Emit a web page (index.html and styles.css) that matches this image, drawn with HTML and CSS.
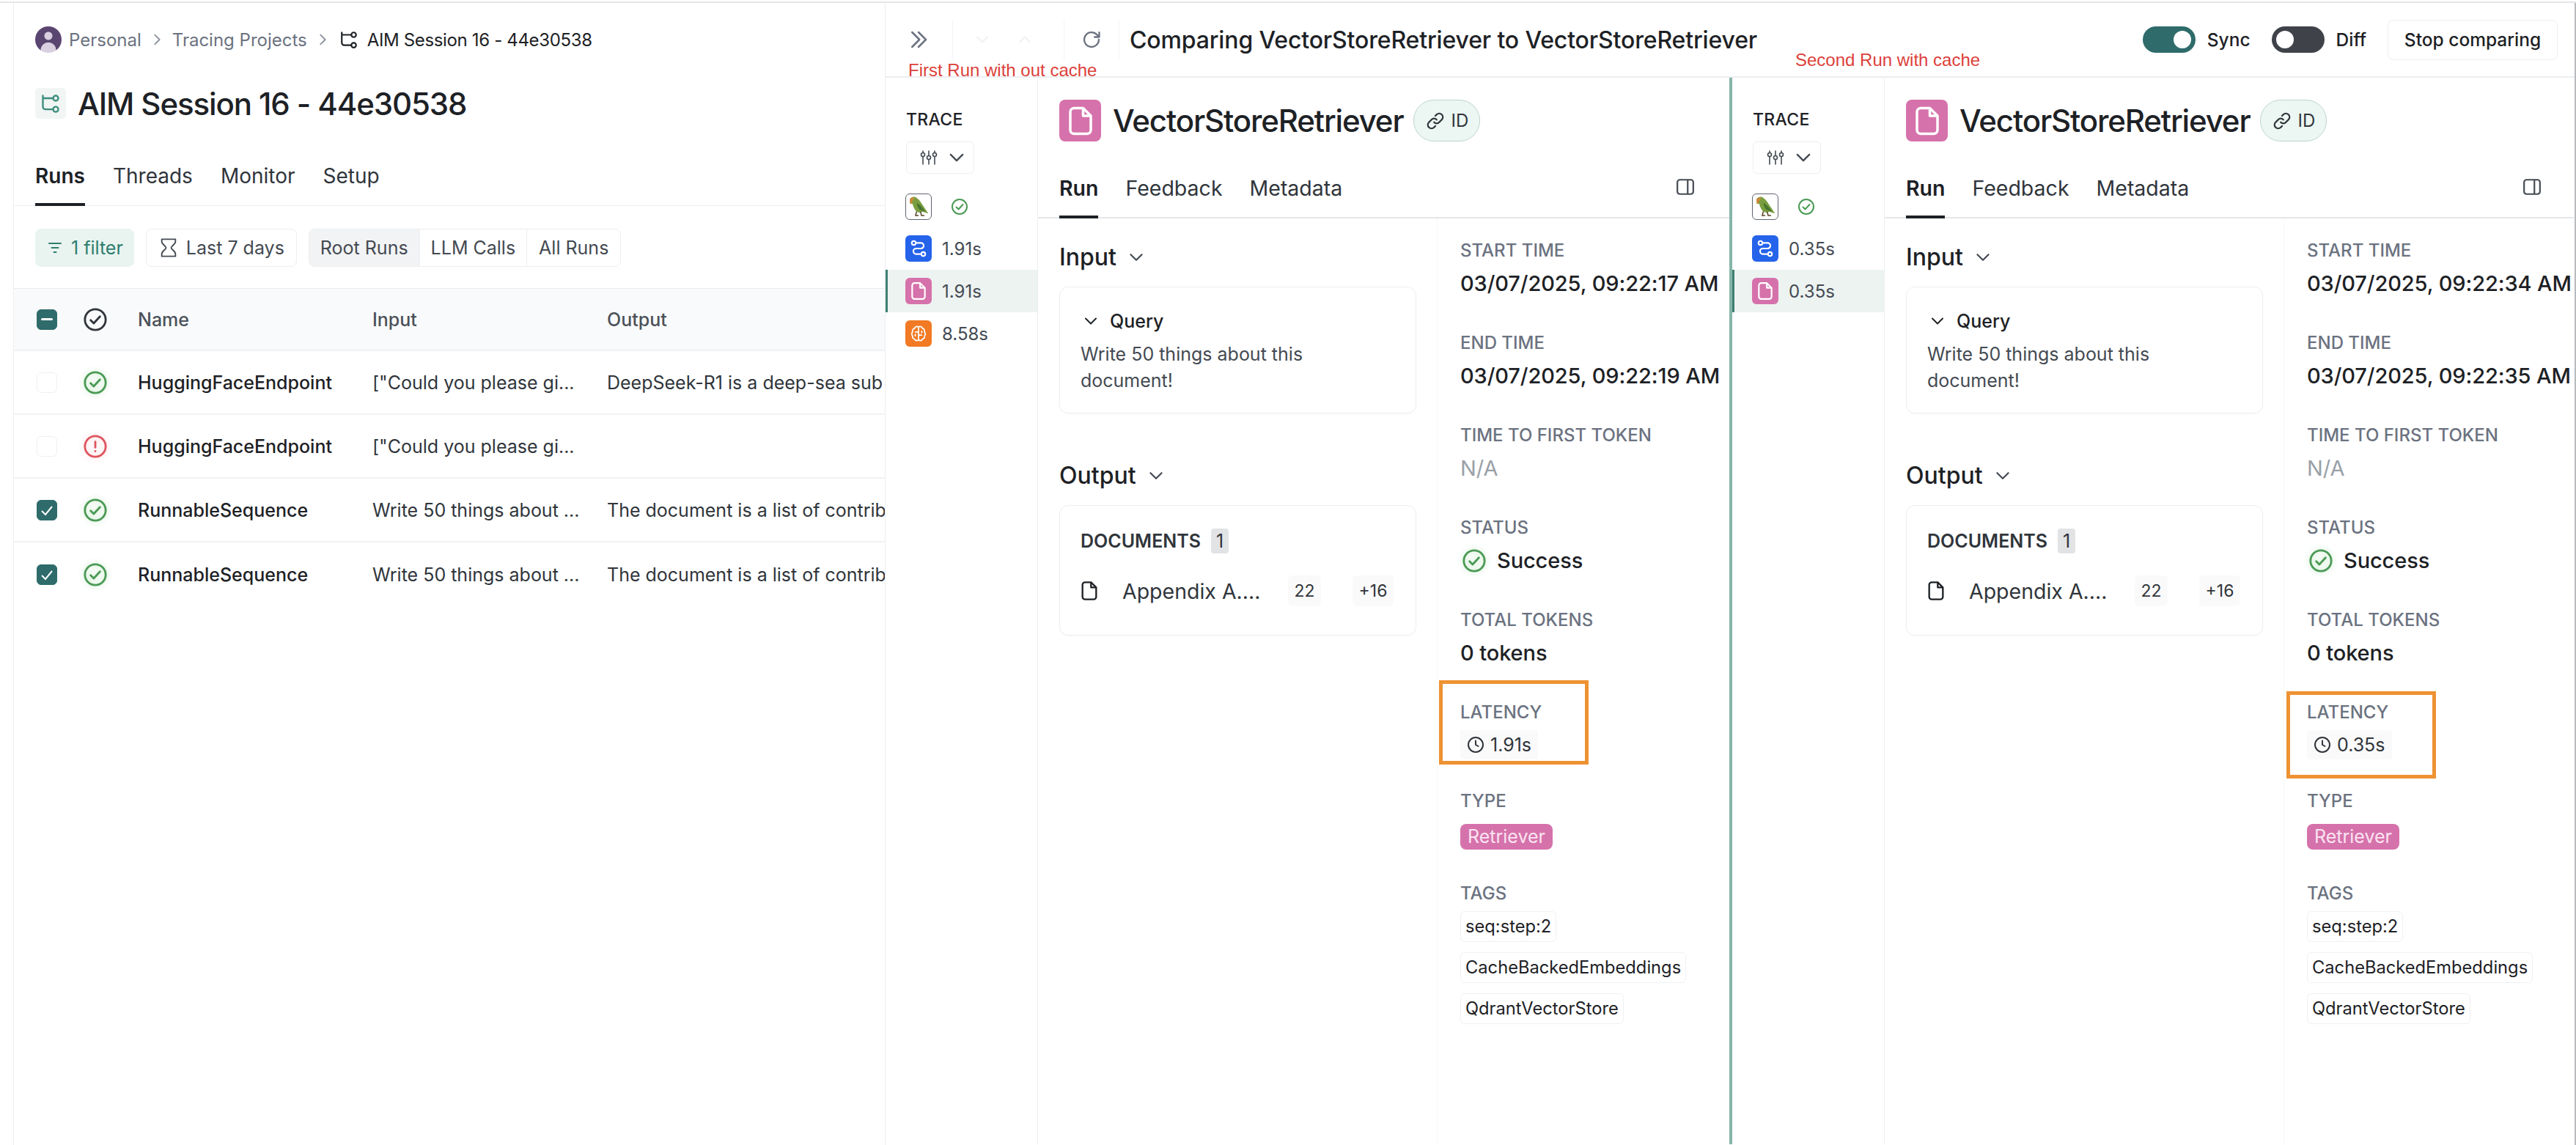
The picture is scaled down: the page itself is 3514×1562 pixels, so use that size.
FILE: index.html
```html
<!DOCTYPE html>
<html>
<head>
    <meta http-equiv="Content-Type" content="text/html; charset=UTF-8">
    <title>AIM Session 16 - 44e30538</title>
    <link rel="stylesheet" href="styles.css">
</head>
<body>
<svg class="sprite" xmlns="http://www.w3.org/2000/svg">
    <symbol id="i-chev-r" viewBox="0 0 24 24"><path d="M9 5l7 7-7 7" fill="none" stroke="currentColor" stroke-width="2" stroke-linecap="round" stroke-linejoin="round"/></symbol>
    <symbol id="i-chev-d" viewBox="0 0 24 24"><path d="M5 8.5l7 7 7-7" fill="none" stroke="currentColor" stroke-width="2" stroke-linecap="round" stroke-linejoin="round"/></symbol>
    <symbol id="i-chev-u" viewBox="0 0 24 24"><path d="M5 15.5l7-7 7 7" fill="none" stroke="currentColor" stroke-width="2" stroke-linecap="round" stroke-linejoin="round"/></symbol>
    <symbol id="i-double" viewBox="0 0 24 24"><path d="M5 4l8 8-8 8M12 4l8 8-8 8" fill="none" stroke="currentColor" stroke-width="2" stroke-linecap="round" stroke-linejoin="round"/></symbol>
    <symbol id="i-tree" viewBox="0 0 24 24"><g fill="none" stroke="currentColor" stroke-width="2" stroke-linecap="round"><path d="M3 3v13a3 3 0 0 0 3 3h9M3 6h12"/><circle cx="18" cy="6" r="3"/><circle cx="18" cy="19" r="3"/></g></symbol>
    <symbol id="i-check" viewBox="0 0 24 24"><g fill="none" stroke="currentColor" stroke-width="2" stroke-linecap="round" stroke-linejoin="round"><circle cx="12" cy="12" r="10"/><path d="M7.5 12.5l3 3 6-6.5"/></g></symbol>
    <symbol id="i-alert" viewBox="0 0 24 24"><g fill="none" stroke="currentColor" stroke-width="2" stroke-linecap="round"><circle cx="12" cy="12" r="10"/><path d="M12 7.5v5.5M12 16.5v.1"/></g></symbol>
    <symbol id="i-filter" viewBox="0 0 24 24"><path d="M4 6h16M7.5 12h9M10.5 18h3" fill="none" stroke="currentColor" stroke-width="2" stroke-linecap="round"/></symbol>
    <symbol id="i-glass" viewBox="0 0 24 24"><path d="M4 2h16a0 0 0 0 1 0 0v3c0 3-5 5-5 7s5 4 5 7v3H4v-3c0-3 5-5 5-7S4 8 4 5z" fill="none" stroke="currentColor" stroke-width="1.6" stroke-linejoin="round"/></symbol>
    <symbol id="i-refresh" viewBox="0 0 24 24"><path d="M20.5 12a8.5 8.5 0 1 1-2.500-6L21 9M21 3.500V9h-5.500" fill="none" stroke="currentColor" stroke-width="2" stroke-linecap="round" stroke-linejoin="round"/></symbol>
    <symbol id="i-file" viewBox="0 0 24 24"><g fill="none" stroke="currentColor" stroke-width="2" stroke-linejoin="round"><path d="M14 2H7a3 3 0 0 0-3 3v14a3 3 0 0 0 3 3h10a3 3 0 0 0 3-3V8z"/><path d="M14 2v6h6"/></g></symbol>
    <symbol id="i-route" viewBox="0 0 24 24"><g fill="none" stroke="currentColor" stroke-width="2" stroke-linecap="round"><circle cx="6" cy="5" r="2.5"/><circle cx="18" cy="19" r="2.5"/><path d="M10 5h5a3.500 3.500 0 0 1 0 7H9a3.500 3.500 0 0 0 0 7h5"/></g></symbol>
    <symbol id="i-brain" viewBox="0 0 24 24"><g fill="none" stroke="currentColor" stroke-width="1.6" stroke-linecap="round" stroke-linejoin="round"><path d="M12 4v16M12 4a3 3 0 0 0-5 1.500A3.500 3.500 0 0 0 4.500 10a3.500 3.500 0 0 0 0 5A3.500 3.500 0 0 0 7 19a3 3 0 0 0 5 1M12 4a3 3 0 0 1 5 1.500A3.500 3.500 0 0 1 19.500 10a3.500 3.500 0 0 1 0 5A3.500 3.500 0 0 1 17 19a3 3 0 0 1-5 1"/><path d="M8 10h4M16 14h-4M8 15a2 2 0 0 1 0-2M16 9a2 2 0 0 1 0 2"/></g></symbol>
    <symbol id="i-sliders" viewBox="0 0 24 24"><g fill="none" stroke="currentColor" stroke-width="1.6" stroke-linecap="round"><path d="M4 3v2M4 11v10M12 3v6M12 15v6M20 3v2M20 11v10"/><circle cx="4" cy="8" r="2.5"/><circle cx="12" cy="12" r="2.5"/><circle cx="20" cy="8" r="2.5"/></g></symbol>
    <symbol id="i-link" viewBox="0 0 24 24"><g fill="none" stroke="currentColor" stroke-width="2" stroke-linecap="round"><path d="M10.5 13.500a4 4 0 0 0 6 0l3-3a4.200 4.200 0 0 0-6-6L12 6"/><path d="M13.5 10.500a4 4 0 0 0-6 0l-3 3a4.200 4.200 0 0 0 6 6L12 18"/></g></symbol>
    <symbol id="i-side" viewBox="0 0 24 24"><g fill="none" stroke="currentColor" stroke-width="2"><rect x="2" y="3" width="20" height="18" rx="3"/><path d="M15 3v18"/></g></symbol>
    <symbol id="i-clock" viewBox="0 0 24 24"><g fill="none" stroke="currentColor" stroke-width="2" stroke-linecap="round" stroke-linejoin="round"><circle cx="12" cy="12" r="10"/><path d="M12 6.500V12l3.500 2"/></g></symbol>
    <symbol id="i-parrot" viewBox="0 0 24 24"><path d="M3 5c1-3 5-4 7-2 3 2 4 4 6 7l6 9-6-2-3 1-3-1C8 15 6 11 6 9L3.500 9z" fill="#7a9e3f"/><path d="M3 5c0-2 3-3 5-2L6 6 5 9 3.500 9z" fill="#c98a3a"/><path d="M10 8c3 1 6 5 9 9l-6-2-2-3z" fill="#47752f"/><path d="M10 17l-1 4h3M14 17l1 4h3" fill="none" stroke="#5b4a2a" stroke-width="1.2"/></symbol>
</svg>

<div class="page">
    <div class="project">
        <div class="crumbs">
            <span class="avatar"></span>
            <span>Personal</span>
            <svg class="crumb-sep"><use href="#i-chev-r"/></svg>
            <span>Tracing Projects</span>
            <svg class="crumb-sep"><use href="#i-chev-r"/></svg>
            <svg class="crumb-ico"><use href="#i-tree"/></svg>
            <span class="crumb-now">AIM Session 16 - 44e30538</span>
        </div>
        <div class="project-title">
            <span class="title-ico"><svg><use href="#i-tree"/></svg></span>
            <h1>AIM Session 16 - 44e30538</h1>
        </div>
        <div class="project-tabs">
            <a class="on">Runs</a><a>Threads</a><a>Monitor</a><a>Setup</a>
        </div>
        <div class="filters">
            <span class="chip chip-green"><svg><use href="#i-filter"/></svg>1 filter</span>
            <span class="chip"><svg><use href="#i-glass"/></svg>Last 7 days</span>
            <span class="seg"><b>Root Runs</b><b>LLM Calls</b><b>All Runs</b></span>
        </div>
        <div class="table">
            <div class="row head">
                <span class="box box-on"><i class="dash"></i></span>
                <svg class="st"><use href="#i-check"/></svg>
                <span>Name</span><span>Input</span><span>Output</span>
            </div>
            <div class="row">
                <span class="box"></span>
                <svg class="st st-ok"><use href="#i-check"/></svg>
                <span class="name">HuggingFaceEndpoint</span><span>["Could you please gi...</span><span>DeepSeek-R1 is a deep-sea sub</span>
            </div>
            <div class="row">
                <span class="box"></span>
                <svg class="st st-err"><use href="#i-alert"/></svg>
                <span class="name">HuggingFaceEndpoint</span><span>["Could you please gi...</span><span></span>
            </div>
            <div class="row">
                <span class="box box-on"><svg viewBox="0 0 24 24"><path d="M5 13l5 5 9-11" fill="none" stroke="#fff" stroke-width="2"/></svg></span>
                <svg class="st st-ok"><use href="#i-check"/></svg>
                <span class="name">RunnableSequence</span><span>Write 50 things about ...</span><span>The document is a list of contrib</span>
            </div>
            <div class="row">
                <span class="box box-on"><svg viewBox="0 0 24 24"><path d="M5 13l5 5 9-11" fill="none" stroke="#fff" stroke-width="2"/></svg></span>
                <svg class="st st-ok"><use href="#i-check"/></svg>
                <span class="name">RunnableSequence</span><span>Write 50 things about ...</span><span>The document is a list of contrib</span>
            </div>
        </div>
    </div>

    <div class="compare">
        <div class="compare-head">
            <span class="cell cell-a"><svg class="ico-double"><use href="#i-double"/></svg></span>
            <span class="cell cell-b"><svg><use href="#i-chev-d"/></svg><svg><use href="#i-chev-u"/></svg></span>
            <span class="cell cell-c"><svg><use href="#i-refresh"/></svg></span>
            <h2>Comparing VectorStoreRetriever to VectorStoreRetriever</h2>
            <span class="switch switch-on"></span><span class="switch-label">Sync</span>
            <span class="switch switch-off"></span><span class="switch-label">Diff</span>
            <span class="stop">Stop comparing</span>
        </div>
        <div class="panels">
            <div class="panel panel-first">
                <div class="trace">
                    <div class="trace-label">TRACE</div>
                    <span class="trace-btn"><svg><use href="#i-sliders"/></svg><svg><use href="#i-chev-d"/></svg></span>
                    <div class="trace-row trace-root">
                        <span class="sq sq-parrot"><svg><use href="#i-parrot"/></svg></span>
                        <svg class="st-small"><use href="#i-check"/></svg>
                    </div>
                    <div class="trace-row"><span class="sq sq-blue"><svg><use href="#i-route"/></svg></span>1.91s</div>
                    <div class="trace-row sel"><span class="sq sq-pink"><svg><use href="#i-file"/></svg></span>1.91s</div>
                    <div class="trace-row"><span class="sq sq-orange"><svg><use href="#i-brain"/></svg></span>8.58s</div>
                </div>
                <div class="detail">
                    <div class="detail-head">
                        <span class="big-ico"><svg><use href="#i-file"/></svg></span>
                        <h3>VectorStoreRetriever</h3>
                        <span class="id-pill"><svg><use href="#i-link"/></svg>ID</span>
                    </div>
                    <div class="detail-tabs">
                        <a class="on">Run</a><a>Feedback</a><a>Metadata</a>
                        <svg class="side-ico"><use href="#i-side"/></svg>
                    </div>
                    <div class="detail-body">
                        <div class="main">
                            <div class="sec">Input <svg><use href="#i-chev-d"/></svg></div>
                            <div class="card card-in">
                                <div class="query"><svg><use href="#i-chev-d"/></svg>Query</div>
                                <p>Write 50 things about this document!</p>
                            </div>
                            <div class="sec sec-out">Output <svg><use href="#i-chev-d"/></svg></div>
                            <div class="card card-out">
                                <div class="docs">DOCUMENTS <span class="count">1</span></div>
                                <div class="doc">
                                    <svg><use href="#i-file"/></svg>
                                    <span class="doc-name">Appendix A....</span>
                                    <span class="num num-a">22</span>
                                    <span class="num num-b">+16</span>
                                </div>
                            </div>
                        </div>
                        <div class="meta">
                            <div class="item"><label>START TIME</label><div class="val">03/07/2025, 09:22:17 AM</div></div>
                            <div class="item"><label>END TIME</label><div class="val">03/07/2025, 09:22:19 AM</div></div>
                            <div class="item"><label>TIME TO FIRST TOKEN</label><div class="val val-na">N/A</div></div>
                            <div class="item"><label>STATUS</label><div class="val val-st"><svg class="st st-ok"><use href="#i-check"/></svg>Success</div></div>
                            <div class="item"><label>TOTAL TOKENS</label><div class="val">0 tokens</div></div>
                            <div class="item item-lat"><label>LATENCY</label><div class="lat"><svg><use href="#i-clock"/></svg>1.91s</div></div>
                            <div class="item"><label>TYPE</label><div class="type-wrap"><span class="type">Retriever</span></div></div>
                            <div class="item"><label>TAGS</label>
                                <div class="tags"><span>seq:step:2</span><span>CacheBackedEmbeddings</span><span>QdrantVectorStore</span></div>
                            </div>
                        </div>
                    </div>
                </div>
            </div>

            <div class="panel panel-second">
                <div class="trace">
                    <div class="trace-label">TRACE</div>
                    <span class="trace-btn"><svg><use href="#i-sliders"/></svg><svg><use href="#i-chev-d"/></svg></span>
                    <div class="trace-row trace-root">
                        <span class="sq sq-parrot"><svg><use href="#i-parrot"/></svg></span>
                        <svg class="st-small"><use href="#i-check"/></svg>
                    </div>
                    <div class="trace-row"><span class="sq sq-blue"><svg><use href="#i-route"/></svg></span>0.35s</div>
                    <div class="trace-row sel"><span class="sq sq-pink"><svg><use href="#i-file"/></svg></span>0.35s</div>
                </div>
                <div class="detail">
                    <div class="detail-head">
                        <span class="big-ico"><svg><use href="#i-file"/></svg></span>
                        <h3>VectorStoreRetriever</h3>
                        <span class="id-pill"><svg><use href="#i-link"/></svg>ID</span>
                    </div>
                    <div class="detail-tabs">
                        <a class="on">Run</a><a>Feedback</a><a>Metadata</a>
                        <svg class="side-ico"><use href="#i-side"/></svg>
                    </div>
                    <div class="detail-body">
                        <div class="main">
                            <div class="sec">Input <svg><use href="#i-chev-d"/></svg></div>
                            <div class="card card-in">
                                <div class="query"><svg><use href="#i-chev-d"/></svg>Query</div>
                                <p>Write 50 things about this document!</p>
                            </div>
                            <div class="sec sec-out">Output <svg><use href="#i-chev-d"/></svg></div>
                            <div class="card card-out">
                                <div class="docs">DOCUMENTS <span class="count">1</span></div>
                                <div class="doc">
                                    <svg><use href="#i-file"/></svg>
                                    <span class="doc-name">Appendix A....</span>
                                    <span class="num num-a">22</span>
                                    <span class="num num-b">+16</span>
                                </div>
                            </div>
                        </div>
                        <div class="meta">
                            <div class="item"><label>START TIME</label><div class="val">03/07/2025, 09:22:34 AM</div></div>
                            <div class="item"><label>END TIME</label><div class="val">03/07/2025, 09:22:35 AM</div></div>
                            <div class="item"><label>TIME TO FIRST TOKEN</label><div class="val val-na">N/A</div></div>
                            <div class="item"><label>STATUS</label><div class="val val-st"><svg class="st st-ok"><use href="#i-check"/></svg>Success</div></div>
                            <div class="item"><label>TOTAL TOKENS</label><div class="val">0 tokens</div></div>
                            <div class="item item-lat"><label>LATENCY</label><div class="lat"><svg><use href="#i-clock"/></svg>0.35s</div></div>
                            <div class="item"><label>TYPE</label><div class="type-wrap"><span class="type">Retriever</span></div></div>
                            <div class="item"><label>TAGS</label>
                                <div class="tags"><span>seq:step:2</span><span>CacheBackedEmbeddings</span><span>QdrantVectorStore</span></div>
                            </div>
                        </div>
                    </div>
                </div>
            </div>
        </div>
    </div>
</div>

<!-- annotations drawn on top of the screenshot -->
<div class="note note-first">First Run with out cache</div>
<div class="note note-second">Second Run with cache</div>
<div class="mark mark-first"></div>
<div class="mark mark-second"></div>
</body>
</html>
```

FILE: styles.css
```css
html, body{margin:0; padding:0; background:#fff;}
body{position:relative; width:3514px; height:1562px; overflow:hidden; padding-top:2px; box-sizing:border-box; font-family:Inter, "Noto Sans", sans-serif; color:#1d2125;}
svg{display:block;}
.sprite{position:absolute; width:0; height:0;}
h1, h2, h3, p{margin:0; font-weight:500;}

.page{display:flex; height:1560px; border-top:2px solid #e4e5e7; padding-left:18px; box-sizing:border-box;}

/* left side: project */
.project{width:1189px; flex:none; border-left:1px solid #eeeff1; box-sizing:border-box; overflow:hidden; padding-top:32px;}
.crumbs{display:flex; align-items:center; height:36px; margin-left:29px; font-size:24px; color:#6b7280; white-space:nowrap;}
.avatar{width:36px; height:36px; border-radius:50%; margin-right:10px; background:radial-gradient(circle at 50% 36%, #d9cfe0 0 5px, transparent 6px), radial-gradient(circle at 50% 90%, #d9cfe0 0 10px, #5a4470 11px 100%);}
.crumb-sep{width:22px; height:22px; margin:0 10px; color:#8b929c;}
.crumb-ico{width:26px; height:26px; margin:0 12px 0 2px; color:#1d2125;}
.crumb-now{color:#1d2125; letter-spacing:-0.35px;}
.project-title{display:flex; align-items:center; margin:48px 0 0 29px; height:42px;}
.title-ico{width:42px; height:42px; margin-right:16px; border-radius:5px; background:#f1f5f4; color:#3b8d7d; display:flex; align-items:center; justify-content:center;}
.title-ico svg{width:28px; height:28px;}
h1{font-size:42px; white-space:nowrap; letter-spacing:-1.1px;}
.project-tabs{display:flex; gap:38px; margin-top:41px; padding-left:29px; height:78px; border-bottom:1px solid #eceef0; box-sizing:border-box;}
.project-tabs a{font-size:28px; color:#30353b; line-height:75px; height:78px; box-sizing:border-box;}
.project-tabs a.on{font-weight:600; color:#1d2125; border-bottom:4px solid #1d2125;}
.filters{display:flex; align-items:center; gap:16px; height:52px; margin:31px 0 29px 29px;}
.chip{display:flex; align-items:center; height:52px; padding:0 16px; gap:10px; border:1px solid #eceef0; border-radius:8px; font-size:25px; color:#444a52; box-sizing:border-box;}
.chip svg{width:28px; height:28px;}
.chip-green{background:#e9f4f1; border-color:#e9f4f1; color:#2f7d6d; padding:0 14px;}
.chip-green svg{width:24px; height:24px;}
.seg{display:flex; height:52px; border:1px solid #eceef0; border-radius:8px; overflow:hidden; box-sizing:border-box;}
.seg b{font-weight:400; font-size:25px; color:#444a52; line-height:50px; padding:0 15px; border-left:1px solid #eceef0;}
.seg b:first-child{background:#f2f3f4; border-left:0;}
.seg b:last-child{padding:0 16px 0 16px;}

.table{border-top:1px solid #e8eaec;}
.row{display:grid; grid-template-columns:63px 75px 320px 320px 1fr; align-items:center; height:87px; padding-left:31px; border-bottom:2px solid #f1f2f4; box-sizing:border-box; font-size:25px; color:#30353b; white-space:nowrap;}
.row:last-child{border-bottom:0;}
.row.head{height:85px; background:#f9fafb; color:#4b5159; font-weight:500; font-size:25px;}
.row .name{font-weight:500; color:#1d2125;}
.box{width:28px; height:28px; border-radius:6px; border:1px solid #eef0f2; box-sizing:border-box; display:flex; align-items:center; justify-content:center;}
.box-on{background:#2e6b6a; border-color:#2e6b6a;}
.box svg{width:24px; height:24px;}
.dash{width:16px; height:3px; background:#fff; border-radius:2px;}
.st{width:34px; height:34px; color:#30353b;}
.st-ok{color:#4b9a55; filter:drop-shadow(0 0 4px #bfe6c0);}
.st-err{color:#df5560; filter:drop-shadow(0 0 4px #f7cfd2);}

/* right side: compare overlay */
.compare{flex:1; min-width:0; border-left:1px solid #eceef0; border-right:2px solid #b9bbbe; overflow:hidden;}
.compare-head{display:flex; align-items:center; height:100px; border-bottom:2px solid #eceef0; box-sizing:content-box;}
.cell{display:flex; align-items:center; height:55px; border-right:1px solid #f3f4f6; box-sizing:border-box; color:#6b7280;}
.cell-a{width:92px; padding-left:30px;}
.cell-b{width:152px; padding-left:28px; gap:34px; color:#eef0f2;}
.cell-b svg{width:24px; height:24px;}
.cell-c{width:75px; padding-left:23px;}
.cell-c svg{width:28px; height:28px;}
.ico-double{width:30px; height:30px;}
h2{flex:1; font-size:32px; padding-left:14px; white-space:nowrap; letter-spacing:-0.15px;}
.switch{position:relative; width:72px; height:36px; border-radius:18px; margin-right:16px;}
.switch::after{content:""; position:absolute; top:6px; width:24px; height:24px; border-radius:50%; background:#fff;}
.switch-on{background:#2e6b6a;}
.switch-on::after{right:6px;}
.switch-off{background:#3f4349;}
.switch-off::after{left:6px;}
.switch-label{font-size:24.5px; font-weight:500; margin-right:29px;}
.stop{width:232px; height:55px; line-height:53px; text-align:center; margin:0 23px 0 0; border:1px solid #eceef0; border-radius:8px; font-size:24.5px; font-weight:500; box-sizing:border-box; white-space:nowrap;}

.panels{display:flex; height:1455px;}
.panel{display:flex; flex:none;}
.panel-first{width:1155px; border-right:4px solid #86b5a8; box-sizing:border-box;}
.panel-second{width:1148px;}
.trace{width:207px; flex:none; border-right:1px solid #eceef0; padding-top:42px;}
.trace-label{margin-left:28px; font-size:23px; font-weight:500; line-height:30px; letter-spacing:0.3px;}
.trace-btn{display:flex; align-items:center; gap:12px; width:93px; height:44px; margin:15px 0 17px 28px; padding-left:18px; border:1px solid #eceef0; border-radius:6px; box-sizing:border-box;}
.trace-btn svg{width:24px; height:24px; color:#444a52;}
.trace-btn svg + svg{width:28px; height:28px;}
.trace-row{display:flex; align-items:center; gap:14px; height:58px; padding-left:27px; font-size:24px; color:#444a52; box-sizing:border-box;}
.trace-root{height:56px;}
.trace-row.sel{background:#edf3f1; box-shadow:inset 3px 0 0 #3f7f72;}
.sq{width:36px; height:36px; border-radius:6px; display:flex; align-items:center; justify-content:center; color:#fff; box-sizing:border-box;}
.sq svg{width:26px; height:26px;}
.sq-parrot{border:1px solid #5f6670; background:#fff;}
.sq-parrot svg{width:32px; height:32px;}
.sq-blue{background:#2563eb;}
.sq-pink{background:#d672ab;}
.sq-orange{background:#f27a24;}
.st-small{width:24px; height:24px; margin-left:12px; color:#4b9a55;}

.detail{flex:1; min-width:0; display:flex; flex-direction:column;}
.detail-head{display:flex; align-items:center; height:57px; margin:30px 0 0 29px;}
.big-ico{width:57px; height:57px; border-radius:8px; background:#d672ab; color:#fff; display:flex; align-items:center; justify-content:center; flex:none;}
.big-ico svg{width:42px; height:42px;}
h3{font-size:42px; margin-left:16px; white-space:nowrap; letter-spacing:-1.15px;}
.id-pill{display:flex; align-items:center; gap:8px; height:57px; padding:0 15px; margin-left:13px; border:1px solid #bcd6cd; border-radius:28px; background:#ecf6f2; font-size:24px; color:#30353b; box-sizing:border-box;}
.id-pill svg{width:28px; height:28px;}
.detail-tabs{position:relative; display:flex; gap:37px; height:79px; margin-top:26px; padding-left:29px; border-bottom:2px solid #e4e6e8; box-sizing:border-box;}
.detail-tabs a{font-size:28.5px; color:#30353b; line-height:76px; height:79px; box-sizing:border-box;}
.detail-tabs a.on{font-weight:600; color:#1d2125; border-bottom:4px solid #1d2125;}
.side-ico{position:absolute; top:23px; left:870px; width:26px; height:26px; color:#444a52;}
.detail-body{display:flex; flex:1;}
.main{width:545px; flex:none; padding:33px 28px 0 29px; box-sizing:border-box; border-right:1px solid #f6f7f8;}
.sec{display:flex; align-items:center; gap:14px; font-size:32px; line-height:40px; font-weight:500;}
.sec svg{width:26px; height:26px; color:#444a52;}
.sec-out{margin-top:65px;}
.card{border:1px solid #eceef0; border-radius:12px; margin-top:20px; padding:0 28px; box-sizing:border-box; box-shadow:0 1px 2px rgba(0,0,0,.03);}
.card-in{height:173px; padding-top:31px;}
.card-out{height:178px; padding-top:31px;}
.query{display:flex; align-items:center; gap:14px; font-size:25px; line-height:30px; font-weight:500; margin-left:2px;}
.query svg{width:24px; height:24px;}
.card p{font-size:25px; line-height:36px; font-weight:400; color:#444a52; margin-top:12px; width:400px;}
.docs{display:flex; align-items:center; gap:14px; font-size:25px; font-weight:600; color:#30353b; height:34px;}
.count{width:24px; height:34px; line-height:34px; text-align:center; background:#e2e3e5; border-radius:4px; font-weight:400;}
.doc{display:flex; align-items:center; margin-top:30px; height:42px; font-size:28.5px;}
.doc svg{width:28px; height:28px; margin-right:31px; margin-left:-2px; flex:none;}
.doc-name{width:226px; white-space:nowrap; color:#30353b;}
.num{height:42px; line-height:42px; text-align:center; font-size:23px; background:#fafafa; border-radius:6px; color:#30353b;}
.num-a{width:45px; margin-right:43px;}
.num-b{width:56px;}

.meta{padding:29px 0 0 31px; flex:1; min-width:0;}
.item{height:126px;}
.item-lat{height:121px;}
.item label{display:block; font-size:24px; line-height:30px; color:#6b7280; font-weight:500; white-space:nowrap;}
.val{font-size:29px; line-height:60px; font-weight:500; white-space:nowrap; letter-spacing:-0.1px;}
.val-na{color:#9aa0a8; font-weight:400;}
.val-st{display:flex; align-items:center; gap:14px; font-weight:500;}
.val-st .st{margin-left:2px;}
.lat{display:inline-flex; align-items:center; gap:8px; margin-top:9px; height:40px; padding:0 9px; font-size:25px; color:#30353b; background:#fafafa; border-radius:4px;}
.lat svg{width:24px; height:24px;}
.type-wrap{padding-top:16px;}
.type{display:inline-block; height:35px; line-height:35px; padding:0 10px; border-radius:8px; background:#d672ab; color:#fbe3f1; font-size:25px;}
.tags{display:flex; flex-direction:column; align-items:flex-start; gap:14px; margin-top:9px;}
.tags span{height:42px; line-height:40px; padding:0 6px; font-size:23.7px; border:1px solid #f0f1f3; border-radius:6px; box-sizing:border-box; white-space:nowrap;}

/* annotations */
.note{position:absolute; font-family:"Liberation Sans", Arial, sans-serif; font-size:24px; color:#dc3f3a; line-height:26px; white-space:nowrap;}
.note-first{left:1239px; top:83px;}
.note-second{left:2449px; top:69px;}
.mark{position:absolute; border:5px solid #ee9232; box-sizing:border-box; width:204px;}
.mark-first{left:1963px; top:928px; height:115px;}
.mark-second{left:3119px; top:943px; height:119px;}
```
